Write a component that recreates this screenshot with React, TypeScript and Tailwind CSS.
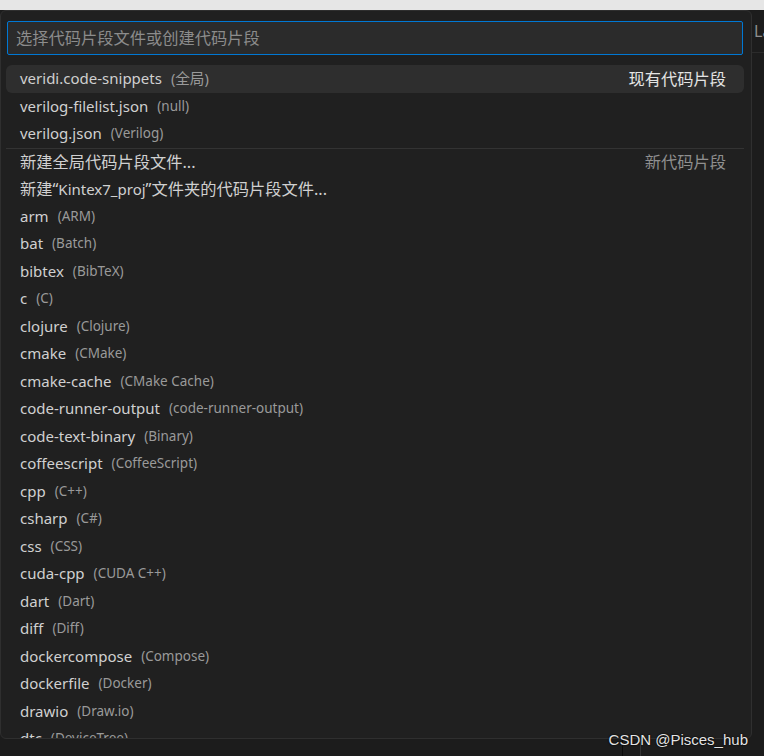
import React from "react";

type Item = { label: React.ReactNode; desc?: React.ReactNode; detail?: string; active?: boolean; sep?: boolean };

const cjk = "text-[16.25px]";

const items: Item[] = [
  { label: "veridi.code-snippets", desc: <span className="text-[14.6px]">(全局)</span>, detail: "现有代码片段", active: true },
  { label: "verilog-filelist.json", desc: "(null)" },
  { label: "verilog.json", desc: "(Verilog)" },
  { label: <span className={cjk}>新建全局代码片段文件...</span>, detail: "新代码片段", sep: true },
  {
    label: (
      <>
        <span className={cjk}>新建“</span>Kintex7_proj<span className={cjk}>”文件夹的代码片段文件...</span>
      </>
    ),
  },
  { label: "arm", desc: "(ARM)" },
  { label: "bat", desc: "(Batch)" },
  { label: "bibtex", desc: "(BibTeX)" },
  { label: "c", desc: "(C)" },
  { label: "clojure", desc: "(Clojure)" },
  { label: "cmake", desc: "(CMake)" },
  { label: "cmake-cache", desc: "(CMake Cache)" },
  { label: "code-runner-output", desc: "(code-runner-output)" },
  { label: "code-text-binary", desc: "(Binary)" },
  { label: "coffeescript", desc: "(CoffeeScript)" },
  { label: "cpp", desc: "(C++)" },
  { label: "csharp", desc: "(C#)" },
  { label: "css", desc: "(CSS)" },
  { label: "cuda-cpp", desc: "(CUDA C++)" },
  { label: "dart", desc: "(Dart)" },
  { label: "diff", desc: "(Diff)" },
  { label: "dockercompose", desc: "(Compose)" },
  { label: "dockerfile", desc: "(Docker)" },
  { label: "drawio", desc: "(Draw.io)" },
  { label: "dtc", desc: "(DeviceTree)" },
];

function Row({ it }: { it: Item }) {
  return (
    <div
      className={
        "ml-[5px] w-[738px] h-[27.5px] shrink-0 flex items-center pl-[14px] pr-[18px] " +
        (it.active ? "bg-[#2e2e2e] rounded-[6px] " : "") +
        (it.sep ? "border-t border-[#333333] " : "")
      }
    >
      <span className="text-[15px] text-[#d0d0d0] whitespace-nowrap leading-none">{it.label}</span>
      {it.desc && <span className="ml-[9px] text-[13.5px] text-[#9a9a9a] whitespace-nowrap leading-none">{it.desc}</span>}
      <div className="flex-1" />
      {it.detail && (
        <span className={cjk + " whitespace-nowrap leading-none " + (it.active ? "text-[#e4e4e4]" : "text-[#8f8f8f]")}>{it.detail}</span>
      )}
    </div>
  );
}

export default function App() {
  return (
    <div
      className="relative w-[764px] h-[756px] overflow-hidden bg-[#1c1c1c] flex flex-col"
      style={{ fontFamily: '"Noto Sans", "Noto Sans CJK SC", sans-serif' }}
    >
      <div className="h-[10px] shrink-0 bg-[#e6e6e6]" />
      <div className="flex flex-1 min-h-0">
        <div className="w-[752px] shrink-0 flex flex-col">
          <div className="h-[729px] shrink-0 bg-[#202020] border border-[#2f2f2f] rounded-[6px] overflow-hidden flex flex-col">
            <div className="mt-[10px] ml-[6px] w-[736px] h-[34px] shrink-0 bg-[#2b2b2b] border border-[#0078d4] rounded-[2px] flex items-center pl-[8px]">
              <span className={cjk + " text-[#8c8c8c]"}>选择代码片段文件或创建代码片段</span>
            </div>
            <div className="mt-[10px] flex flex-col">
              {items.map((it, i) => (
                <Row key={i} it={it} />
              ))}
            </div>
          </div>
          <div className="flex-1 flex">
            <div className="w-[622px]" />
            <div className="w-px bg-[#0c0c0c]" />
            <div className="w-[17px]" />
            <div className="w-px bg-[#343434]" />
          </div>
        </div>
        <div className="flex-1 flex flex-col">
          <div className="h-[43px] flex items-center pl-[2px] border-b border-[#2b2b2b] text-[16px] text-[#8f8f8f] whitespace-nowrap overflow-hidden">
            La
          </div>
        </div>
      </div>
      <div
        className="absolute right-[16px] bottom-[5px] text-[15px] text-[#e4e4e4] whitespace-nowrap"
        style={{ fontFamily: '"Liberation Sans", Arial, sans-serif', textShadow: "0 0 2px #000, 0 0 1px #000" }}
      >
        CSDN @Pisces_hub
      </div>
    </div>
  );
}
